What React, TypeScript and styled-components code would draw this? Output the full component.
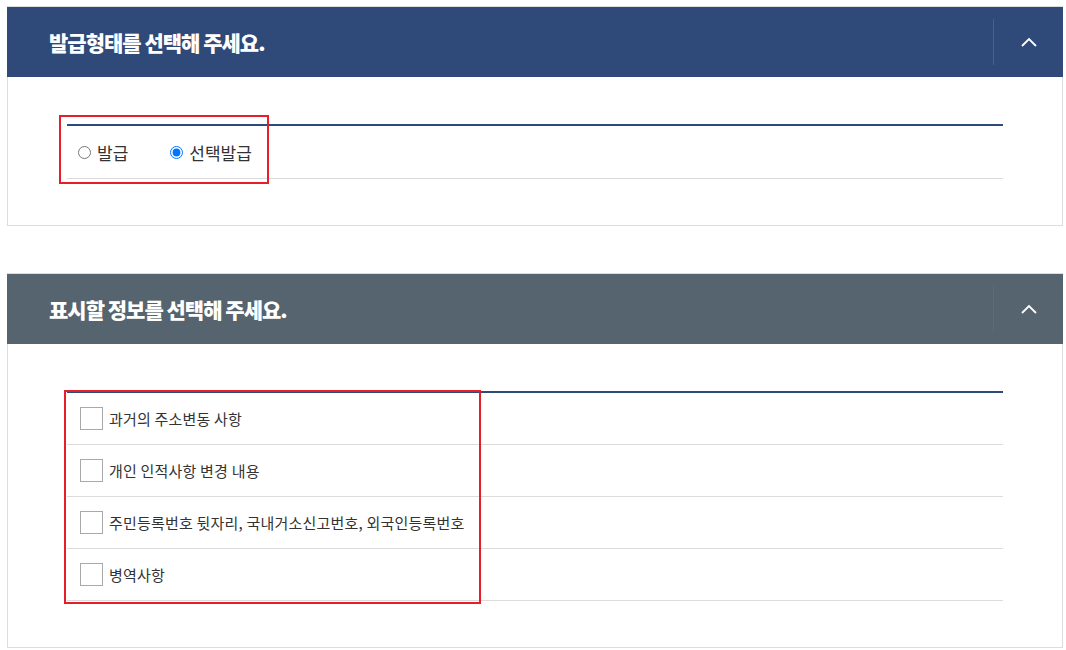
import { useState } from 'react';
import styled, { createGlobalStyle } from 'styled-components';

const GlobalStyle = createGlobalStyle`
  html, body {
    margin: 0;
    padding: 0;
    background: #fff;
  }
  body {
    font-family: "Noto Sans CJK KR", "Noto Sans", sans-serif;
    color: #333;
  }
`;

const Page = styled.div`
  padding: 6px 3px 0 7px;
  display: flex;
  flex-direction: column;
  gap: 47px;
`;

const Panel = styled.section`
  width: 1056px;
  box-sizing: border-box;
  border: 1px solid #dcdcdc;
`;

const Header = styled.div<{ $tone: string }>`
  height: 70px;
  margin: 0 -1px;
  background: ${p => p.$tone};
  display: flex;
  align-items: center;
  color: #fff;
`;

const Title = styled.h2`
  flex: 1;
  margin: 0;
  padding-left: 42px;
  font-size: 21px;
  font-weight: 900;
  letter-spacing: -1px;
`;

const Toggle = styled.button`
  width: 70px;
  height: 46px;
  border: none;
  border-left: 1px solid rgba(90, 115, 165, 0.55);
  background: transparent;
  display: flex;
  align-items: center;
  justify-content: center;
  padding: 0;
  cursor: pointer;
`;

const Body = styled.div`
  position: relative;
  padding: 47px 59px 46px 59px;
`;

const List = styled.div`
  border-top: 2px solid #2f4b7c;
`;

const RadioRow = styled.div`
  height: 53px;
  border-bottom: 1px solid #dcdcdc;
  display: flex;
  align-items: center;
  gap: 42px;
  padding-left: 11px;
  box-sizing: border-box;
`;

const RadioLabel = styled.label`
  display: flex;
  align-items: center;
  gap: 6px;
  font-size: 17px;
  color: #333;
  cursor: pointer;

  input {
    margin: 0;
    width: 13px;
    height: 13px;
    accent-color: #0075ff;
  }
`;

const CheckRow = styled.label`
  height: 52px;
  border-bottom: 1px solid #dcdcdc;
  display: flex;
  align-items: center;
  gap: 6px;
  padding-left: 13px;
  box-sizing: border-box;
  font-size: 15px;
  letter-spacing: 0.2px;
  color: #333;
  cursor: pointer;
`;

const Box = styled.span<{ $on: boolean }>`
  width: 23px;
  height: 23px;
  box-sizing: border-box;
  border: 1px solid #a9a9a9;
  background: ${p => (p.$on ? '#2f4b7c' : '#fff')};
  flex-shrink: 0;
`;

const Mark = styled.div<{ $l: number; $t: number; $w: number; $h: number }>`
  position: absolute;
  left: ${p => p.$l}px;
  top: ${p => p.$t}px;
  width: ${p => p.$w}px;
  height: ${p => p.$h}px;
  box-sizing: border-box;
  border: 2px solid #e61e2a;
  pointer-events: none;
`;

const Chevron = () => (
  <svg width="18" height="12" viewBox="0 0 18 12">
    <path d="M2 10 L9 3 L16 10" fill="none" stroke="#fff" strokeWidth="1.8" />
  </svg>
);

const options = [
  '과거의 주소변동 사항',
  '개인 인적사항 변경 내용',
  '주민등록번호 뒷자리, 국내거소신고번호, 외국인등록번호',
  '병역사항',
];

export default function App() {
  const [kind, setKind] = useState('select');
  const [checked, setChecked] = useState<boolean[]>([false, false, false, false]);

  const flip = (i: number) =>
    setChecked(prev => prev.map((v, j) => (j === i ? !v : v)));

  return (
    <>
      <GlobalStyle />
      <Page>
        <Panel>
          <Header $tone="#2f4a78">
            <Title>발급형태를 선택해 주세요.</Title>
            <Toggle><Chevron /></Toggle>
          </Header>
          <Body>
            <List>
              <RadioRow>
                <RadioLabel>
                  <input type="radio" name="kind" checked={kind === 'all'} onChange={() => setKind('all')} />
                  발급
                </RadioLabel>
                <RadioLabel>
                  <input type="radio" name="kind" checked={kind === 'select'} onChange={() => setKind('select')} />
                  선택발급
                </RadioLabel>
              </RadioRow>
            </List>
            <Mark $l={51} $t={38} $w={210} $h={69} />
          </Body>
        </Panel>

        <Panel>
          <Header $tone="#55646e">
            <Title>표시할 정보를 선택해 주세요.</Title>
            <Toggle><Chevron /></Toggle>
          </Header>
          <Body>
            <List>
              {options.map((text, i) => (
                <CheckRow key={text} onClick={() => flip(i)}>
                  <Box $on={checked[i]} />
                  {text}
                </CheckRow>
              ))}
            </List>
            <Mark $l={56} $t={46} $w={417} $h={214} />
          </Body>
        </Panel>
      </Page>
    </>
  );
}
